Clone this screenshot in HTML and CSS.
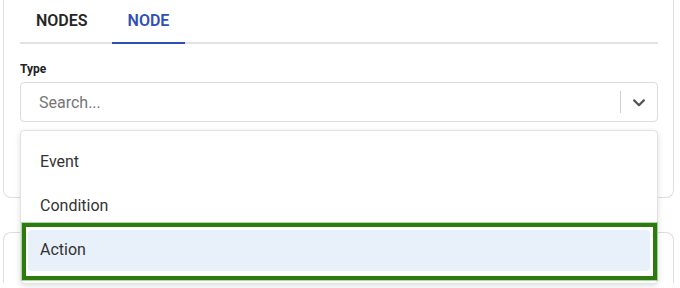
FILE: index.html
```html
<!DOCTYPE html>
<html>
<head>
<meta charset="utf-8">
<link rel="stylesheet" href="styles.css">
</head>
<body>
<div class="page">
  <section class="card card-top">
    <div class="tabs">
      <div class="tab">NODES</div>
      <div class="tab active">NODE</div>
    </div>
    <label class="label">Type</label>
    <div class="field">
      <div class="select">
        <span class="placeholder">Search...</span>
        <span class="sep"></span>
        <span class="chev">
          <svg width="12" height="8" viewBox="0 0 12 8"><path d="M1.2 1.4 L6 6.2 L10.8 1.4" fill="none" stroke="#555" stroke-width="2.2" stroke-linecap="round" stroke-linejoin="round"/></svg>
        </span>
      </div>
      <div class="menu">
        <div class="item">Event</div>
        <div class="item">Condition</div>
        <div class="item selected">Action<span class="mark"></span></div>
      </div>
    </div>
  </section>
  <section class="card card-bottom"></section>
</div>
</body>
</html>
```
FILE: styles.css
```css
html, body {
  margin: 0;
  padding: 0;
  background: #fff;
}
body {
  font-family: Roboto, "Liberation Sans", Arial, sans-serif;
  width: 680px;
  height: 288px;
  overflow: hidden;
}
.page {
  padding: 0 6px 0 3px;
}
.card {
  border: 1px solid #dedede;
  background: #fff;
}
.card-top {
  border-top: none;
  border-radius: 0 0 8px 8px;
  padding: 0 15px 75px 16px;
}
.card-bottom {
  margin-top: 34px;
  height: 50px;
  border-bottom: none;
  border-radius: 8px 8px 0 0;
}
.tabs {
  display: flex;
  gap: 8px;
  border-bottom: 2px solid #e2e2e2;
}
.tab {
  position: relative;
  height: 42px;
  line-height: 42px;
  padding: 0 16px;
  font-size: 16px;
  font-weight: 600;
  color: #262626;
}
.tab.active {
  color: #2f4fb5;
}
.tab.active::after {
  content: "";
  position: absolute;
  left: 0;
  right: 0;
  bottom: -2px;
  height: 2px;
  background: #2f4fb5;
}
.label {
  display: block;
  margin: 17px 0 5px;
  font-size: 12px;
  line-height: 16px;
  font-weight: 700;
  color: #222;
}
.field {
  position: relative;
}
.select {
  display: flex;
  align-items: center;
  height: 40px;
  box-sizing: border-box;
  border: 1px solid #dcdcdc;
  border-radius: 4px;
  padding-left: 18px;
}
.placeholder {
  flex: 1;
  font-size: 16px;
  color: #767676;
}
.sep {
  width: 1px;
  height: 22px;
  background: #cfcfcf;
}
.chev {
  width: 36px;
  height: 38px;
  display: flex;
  align-items: center;
  justify-content: center;
}
.chev svg {
  display: block;
  margin-top: 1px;
}
.menu {
  position: absolute;
  z-index: 10;
  top: calc(100% + 8px);
  left: 0;
  right: 0;
  background: #fff;
  border: 1px solid #e2e2e2;
  border-radius: 4px;
  box-shadow: 0 2px 6px rgba(0, 0, 0, 0.12);
  padding: 11px 7px 12px;
  display: flex;
  flex-direction: column;
  gap: 4px;
}
.item {
  position: relative;
  height: 40px;
  line-height: 40px;
  padding-left: 12px;
  font-size: 16px;
  color: #333;
  border-radius: 4px;
}
.item.selected {
  background: #e8f1fa;
  height: 41px;
}
.mark {
  position: absolute;
  top: -7px;
  left: -6px;
  right: -7px;
  bottom: -9px;
  border: 4px solid #2c7a10;
  box-shadow: 0 0 0 1px rgba(110, 185, 90, 0.55);
  pointer-events: none;
}
```
